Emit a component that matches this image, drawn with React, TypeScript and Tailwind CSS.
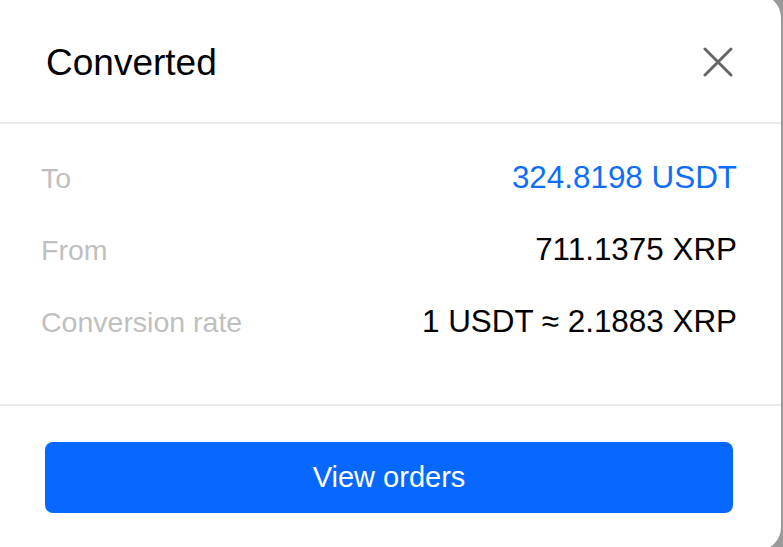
import React from "react";

export default function App() {
  return (
    <div
      className="relative w-[783px] h-[547px] overflow-hidden bg-[#9a9a9a]"
      style={{ fontFamily: '"Liberation Sans", Arial, sans-serif' }}
    >
      <div className="absolute left-[-12px] top-[-6px] w-[793px] h-[557px] bg-white rounded-[24px] flex flex-col">
        <div className="h-[130px] shrink-0 flex items-center justify-between pt-[8px] pl-[58px] pr-[48px] border-b-2 border-[#ebebeb]">
          <span className="text-[37px] text-black leading-none">Converted</span>
          <svg width="30" height="30" viewBox="0 0 30 30" fill="none">
            <path d="M2 2 L28 28 M28 2 L2 28" stroke="#666" strokeWidth="3" strokeLinecap="round" />
          </svg>
        </div>
        <div className="h-[282px] shrink-0 flex flex-col pt-[18px] pl-[53px] pr-[44px] border-b-2 border-[#ebebeb]">
          <div className="h-[72px] flex items-center justify-between">
            <span className="text-[28.5px] text-[#bfbfbf]">To</span>
            <span className="text-[31.4px] text-[#0f6ef8]">324.8198 USDT</span>
          </div>
          <div className="h-[72px] flex items-center justify-between">
            <span className="text-[28.5px] text-[#bfbfbf]">From</span>
            <span className="text-[31.4px] text-black">711.1375 XRP</span>
          </div>
          <div className="h-[72px] flex items-center justify-between">
            <span className="text-[28.5px] text-[#bfbfbf]">Conversion rate</span>
            <span className="text-[31.4px] text-black">1 USDT ≈ 2.1883 XRP</span>
          </div>
        </div>
        <div className="pt-[36px] pl-[57px] pr-[48px]">
          <div className="h-[71px] rounded-[8px] bg-[#0668ff] flex items-center justify-center">
            <span className="text-[29px] text-white font-medium">View orders</span>
          </div>
        </div>
      </div>
    </div>
  );
}
